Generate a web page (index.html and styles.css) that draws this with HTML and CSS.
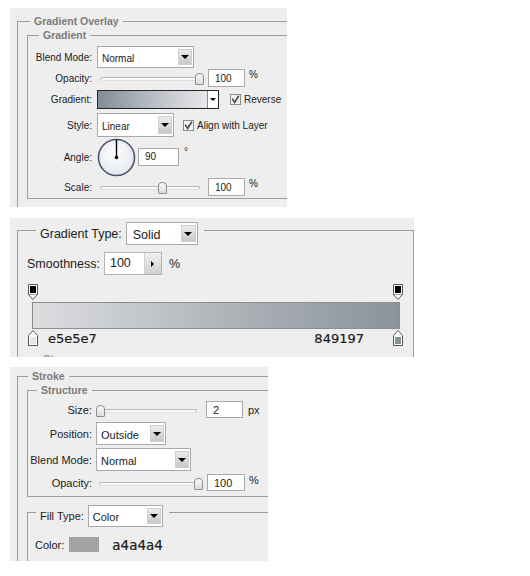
FILE: index.html
```html
<!DOCTYPE html>
<html lang="en">

<head>
  <meta charset="UTF-8">
  <meta name="viewport" content="width=device-width, initial-scale=1.0">
  <title>Layer Style</title>

  <link rel="stylesheet" href="styles.css">
</head>

<body>
  <!-- gradient overlay -->
  <div class="panel p1">
    <div class="group fill">
      <div class="title t-outer">Gradient Overlay</div>
      <div class="group sub">
        <div class="title t-inner">Gradient</div>

        <div class="row mt4 h22">
          <span class="lbl">Blend Mode:</span>
          <div class="select w97"><span>Normal</span><i class="btn"></i></div>
        </div>

        <div class="row mt1 h18">
          <span class="lbl">Opacity:</span>
          <div class="slider w106"><i class="track"></i><i class="thumb" style="left: 98px"></i></div>
          <div class="num w37 ml5">100</div>
          <span class="unit">%</span>
        </div>

        <div class="row mt3 h19">
          <span class="lbl">Gradient:</span>
          <div class="gswatch"><i class="gfill"></i><i class="gbtn"></i></div>
          <label class="chk ml11">
            <svg width="11" height="11" viewBox="0 0 11 11"><rect x="0.5" y="0.5" width="10" height="10" fill="#f1f1f1" stroke="#8d8d8d"/><path d="M2.3 4.6 L4.6 8.4 L8.8 1.8" fill="none" stroke="#4a4a4a" stroke-width="1.6"/></svg>
            Reverse
          </label>
        </div>

        <div class="row mt4 h24">
          <span class="lbl">Style:</span>
          <div class="select w77"><span>Linear</span><i class="btn"></i></div>
          <label class="chk ml9">
            <svg width="11" height="11" viewBox="0 0 11 11"><rect x="0.5" y="0.5" width="10" height="10" fill="#f1f1f1" stroke="#8d8d8d"/><path d="M2.3 4.6 L4.6 8.4 L8.8 1.8" fill="none" stroke="#4a4a4a" stroke-width="1.6"/></svg>
            Align with Layer
          </label>
        </div>

        <div class="row mt1 h39">
          <span class="lbl">Angle:</span>
          <svg class="dial" width="39" height="39" viewBox="0 0 39 39">
            <defs>
              <radialGradient id="dialbg" cx="0.45" cy="0.4" r="0.6">
                <stop offset="0" stop-color="#ffffff"/>
                <stop offset="1" stop-color="#e3e7ee"/>
              </radialGradient>
            </defs>
            <circle cx="19.5" cy="19.5" r="18" fill="url(#dialbg)" stroke="#4d5470" stroke-width="1.6"/>
            <line x1="19.5" y1="19.5" x2="19.5" y2="1.5" stroke="#000" stroke-width="1.4"/>
            <circle cx="19.5" cy="19.5" r="1.8" fill="#000"/>
          </svg>
          <div class="num angle w41 ml2">90</div>
          <span class="deg">°</span>
        </div>

        <div class="row mt1 h18">
          <span class="lbl">Scale:</span>
          <div class="slider w106"><i class="track"></i><i class="thumb" style="left: 61px"></i></div>
          <div class="num w37 ml5">100</div>
          <span class="unit">%</span>
        </div>
      </div>
    </div>
  </div>

  <!-- gradient editor -->
  <div class="panel p2">
    <div class="group fill boxed">
      <div class="legend lg-type">
        <span>Gradient Type:</span>
        <div class="select w72"><span>Solid</span><i class="btn"></i></div>
      </div>

      <div class="smooth">
        <span>Smoothness:</span>
        <div class="spin"><span>100</span><i class="sbtn"></i></div>
        <span class="pct">%</span>
      </div>

      <div class="stops">
        <svg width="10" height="16" viewBox="0 0 10 16"><path d="M0.5 0.5 H9.5 V10.5 L5 15.5 L0.5 10.5 Z" fill="#fff" stroke="#555"/><rect x="2" y="2" width="6" height="7" fill="#000"/><line x1="1" y1="10.5" x2="9" y2="10.5" stroke="#999"/></svg>
        <svg width="10" height="16" viewBox="0 0 10 16"><path d="M0.5 0.5 H9.5 V10.5 L5 15.5 L0.5 10.5 Z" fill="#fff" stroke="#555"/><rect x="2" y="2" width="6" height="7" fill="#000"/><line x1="1" y1="10.5" x2="9" y2="10.5" stroke="#999"/></svg>
      </div>

      <div class="gbar"></div>

      <div class="stops bottom">
        <svg width="10" height="16" viewBox="0 0 10 16"><path d="M5 0.5 L9.5 5.5 V15.5 H0.5 V5.5 Z" fill="#fff" stroke="#555"/><rect x="2" y="7" width="6" height="7" fill="#e5e5e7"/></svg>
        <span class="hex hex-l">e5e5e7</span>
        <span class="hex hex-r">849197</span>
        <svg width="10" height="16" viewBox="0 0 10 16"><path d="M5 0.5 L9.5 5.5 V15.5 H0.5 V5.5 Z" fill="#fff" stroke="#555"/><rect x="2" y="7" width="6" height="7" fill="#849197"/></svg>
      </div>

      <div class="title t-cut">Stops</div>
    </div>
  </div>

  <!-- stroke -->
  <div class="panel p3">
    <div class="group fill">
      <div class="title t-stroke">Stroke</div>
      <div class="group sub s-struct">
        <div class="title t-struct">Structure</div>

        <div class="row mt4 h17">
          <span class="lbl">Size:</span>
          <div class="slider w104"><i class="track"></i><i class="thumb" style="left: 0px"></i></div>
          <div class="num w37 ml6">2</div>
          <span class="unit ml5u">px</span>
        </div>

        <div class="row mt4 h23">
          <span class="lbl">Position:</span>
          <div class="select w70"><span>Outside</span><i class="btn"></i></div>
        </div>

        <div class="row mt3 h23">
          <span class="lbl">Blend Mode:</span>
          <div class="select w95"><span>Normal</span><i class="btn"></i></div>
        </div>

        <div class="row mt3 h17">
          <span class="lbl">Opacity:</span>
          <div class="slider w106"><i class="track"></i><i class="thumb" style="left: 98px"></i></div>
          <div class="num w38 ml5">100</div>
          <span class="unit">%</span>
        </div>
      </div>

      <div class="group filltype">
        <div class="legend lg-fill">
          <span>Fill Type:</span>
          <div class="select w75"><span>Color</span><i class="btn"></i></div>
        </div>
        <div class="color-row">
          <span>Color:</span>
          <i class="swatch"></i>
          <span class="hex hex-c">a4a4a4</span>
        </div>
      </div>
    </div>
  </div>
</body>

</html>
```

FILE: styles.css
```css
* {
  margin: 0;
  padding: 0;
  box-sizing: border-box;
}

body {
  background: #fff;
  font-family: "Liberation Sans", Arial, sans-serif;
  color: #1c1c1c;
}

i {
  display: block;
}

/* panels */
.panel {
  background: #eeeeee;
  margin-left: 10px;
  display: flex;
  flex-direction: column;
  overflow: hidden;
}

.p1 {
  width: 277px;
  height: 199px;
  margin-top: 8px;
  padding: 13px 0 0 7px;
  font-size: 10px;
}

.p2 {
  width: 404px;
  height: 139px;
  margin-top: 11px;
  padding: 12px 0 0 7px;
  font-size: 12.5px;
}

.p3 {
  width: 258px;
  height: 194px;
  margin-top: 10px;
  padding: 9px 0 0 7px;
  font-size: 11px;
}

/* group boxes */
.group {
  display: flex;
  flex-direction: column;
  border-top: 1px solid #9d9d9d;
  border-left: 1px solid #9d9d9d;
}

.fill {
  flex: 1;
}

.boxed {
  border-right: 1px solid #9d9d9d;
}

.sub {
  margin: 7px 0 0 9px;
  border-bottom: 1px solid #9d9d9d;
  padding-bottom: 2px;
}

.s-struct {
  padding-bottom: 5px;
}

.title {
  align-self: flex-start;
  margin-top: -7px;
  padding: 0 4px;
  line-height: 13px;
  background: #eeeeee;
  color: #7b7b7b;
  font-weight: bold;
  font-size: 10.5px;
}

.t-outer {
  margin-left: 12px;
}

.t-inner {
  margin-left: 11px;
}

.t-stroke {
  margin-left: 10px;
}

.t-struct {
  margin-left: 9px;
}

.t-cut {
  margin: 7px 0 0 21px;
  font-size: 11px;
  color: #9a9a9a;
}

.legend {
  display: flex;
  align-items: center;
  align-self: flex-start;
  background: #eeeeee;
  padding: 0 6px 0 4px;
}

.legend .select {
  margin-left: 4px;
}

.lg-type {
  height: 23px;
  margin: -9px 0 0 18px;
}

.lg-fill {
  height: 22px;
  margin: -8px 0 0 8px;
}

/* rows */
.row {
  display: flex;
  align-items: center;
}

.lbl {
  flex: none;
  width: 64px;
  margin-right: 5px;
  text-align: right;
}

.p3 .lbl {
  margin-right: 4px;
}

.mt1 { margin-top: 1px; }
.mt3 { margin-top: 3px; }
.mt4 { margin-top: 4px; }

.h17 { height: 17px; }
.h18 { height: 18px; }
.h19 { height: 19px; }
.h22 { height: 22px; }
.h23 { height: 23px; }
.h24 { height: 24px; }
.h39 { height: 39px; }

.ml2 { margin-left: 2px; }
.ml5 { margin-left: 5px; }
.ml6 { margin-left: 6px; }
.ml9 { margin-left: 9px; }
.ml11 { margin-left: 11px; }

/* dropdown */
.select {
  display: flex;
  align-items: center;
  align-self: stretch;
  background: #fff;
  border: 1px solid #a9a9a9;
  padding-left: 4px;
}

.select span {
  flex: 1;
  padding-top: 2px;
}

.select .btn {
  flex: none;
  width: 14px;
  align-self: stretch;
  margin: 2px 1px 2px 0;
  background: linear-gradient(#ececec, #c8c8c8);
  border: 1px solid #cfcfcf;
  display: flex;
  align-items: center;
  justify-content: center;
}

.select .btn::after {
  content: '';
  border-left: 4px solid transparent;
  border-right: 4px solid transparent;
  border-top: 4px solid #000;
}

.w70 { width: 70px; }
.w72 { width: 72px; }
.w75 { width: 75px; }
.w77 { width: 77px; }
.w95 { width: 95px; }
.w97 { width: 97px; }

.p2 .select span {
  padding-left: 2px;
}

.p2 .select .btn {
  width: 15px;
}

/* number box */
.num {
  align-self: stretch;
  display: flex;
  align-items: center;
  background: #fff;
  border: 1px solid #a9a9a9;
  padding-left: 6px;
}

.num.angle {
  align-self: center;
  height: 18px;
  margin-top: -2px;
}

.w37 { width: 37px; }
.w38 { width: 38px; }
.w41 { width: 41px; }

.unit {
  margin-left: 4px;
  align-self: flex-start;
}

.ml5u {
  margin-left: 5px;
  align-self: center;
}

.deg {
  align-self: flex-start;
  margin: 8px 0 0 5px;
}

/* slider */
.slider {
  position: relative;
  align-self: stretch;
  display: flex;
  align-items: center;
}

.w104 { width: 104px; }
.w106 { width: 106px; }

.slider .track {
  flex: 1;
  height: 4px;
  margin: 2px 3px 0;
  border: 1px solid #b9b9b9;
  border-bottom-color: #e2e2e2;
  border-radius: 2px;
  background: #f7f7f7;
}

.slider .thumb {
  position: absolute;
  top: 50%;
  width: 9px;
  height: 12px;
  margin-top: -5px;
  border: 1px solid #8e8e8e;
  border-radius: 4px 4px 1px 1px;
  background: linear-gradient(#fafafa, #dcdcdc);
}

/* gradient picker */
.gswatch {
  display: flex;
  width: 122px;
  align-self: stretch;
  border: 1px solid #262626;
}

.gfill {
  flex: 1;
  background: linear-gradient(to right, #828c96, #b8bdc3 50%, #e8e8ea);
}

.gbtn {
  width: 11px;
  background: #fff;
  border-left: 1px solid #8a8a8a;
  display: flex;
  align-items: center;
  justify-content: center;
}

.gbtn::after {
  content: '';
  border-left: 3px solid transparent;
  border-right: 3px solid transparent;
  border-top: 3px solid #000;
}

.chk {
  display: flex;
  align-items: center;
  gap: 3px;
}

.dial {
  display: block;
}

/* gradient editor */
.smooth {
  display: flex;
  align-items: center;
  height: 23px;
  margin: 7px 0 0 9px;
}

.spin {
  display: flex;
  width: 58px;
  height: 23px;
  margin-left: 4px;
  background: #fff;
  border: 1px solid #b4b4b4;
}

.spin span {
  flex: 1;
  padding: 3px 0 0 5px;
}

.sbtn {
  width: 17px;
  background: linear-gradient(#f0f0f0, #cfcfcf);
  border-left: 1px solid #d0d0d0;
  display: flex;
  align-items: center;
  justify-content: center;
}

.sbtn::after {
  content: '';
  border-top: 3px solid transparent;
  border-bottom: 3px solid transparent;
  border-left: 3px solid #000;
}

.pct {
  margin-left: 7px;
}

.stops {
  display: flex;
  justify-content: space-between;
  align-items: center;
  height: 16px;
  margin-top: 9px;
  padding: 0 10px;
}

.stops svg {
  display: block;
  flex: none;
}

.stops.bottom {
  margin-top: 1px;
  justify-content: flex-start;
}

.gbar {
  width: 368px;
  height: 27px;
  margin: 2px 0 0 14px;
  border: 1px solid #8e8e8e;
  background: linear-gradient(to right, #dcdddf, #c3c6ca 30%, #a9afb4 60%, #8a939b);
}

.hex {
  font-family: "DejaVu Sans", Verdana, sans-serif;
  font-size: 13px;
  color: #1a1a1a;
  -webkit-text-stroke: 0.2px #1a1a1a;
}

.hex-l {
  margin-left: 10px;
}

.hex-r {
  margin: 0 29px 0 auto;
}

/* stroke */
.filltype {
  flex: 1;
  margin: 15px 0 0 9px;
}

.color-row {
  display: flex;
  align-items: center;
  height: 15px;
  margin-top: 10px;
  padding-left: 7px;
}

.swatch {
  width: 30px;
  height: 15px;
  margin-left: 5px;
  background: #a4a4a4;
}

.hex-c {
  margin-left: 13px;
  font-size: 13.5px;
}
```
